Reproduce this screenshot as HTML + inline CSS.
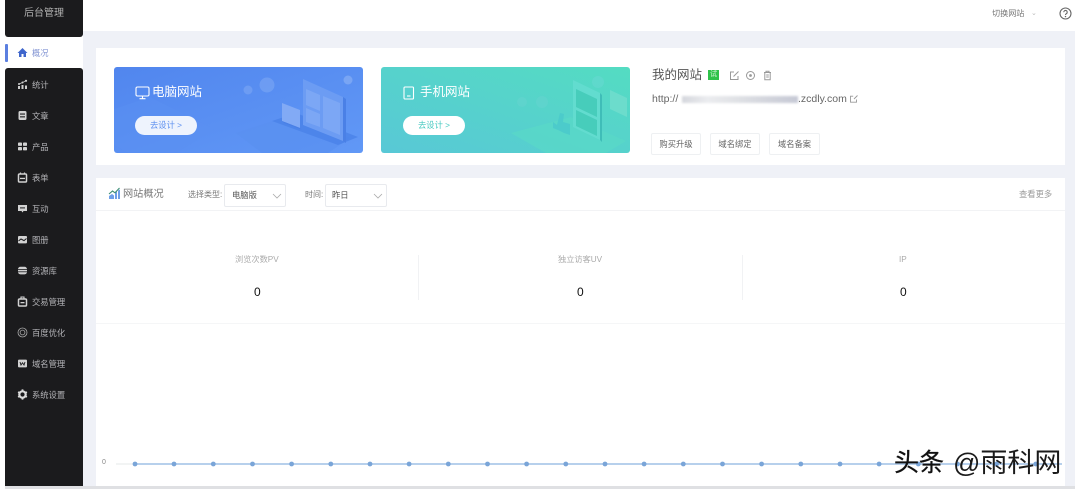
<!DOCTYPE html>
<html lang="zh">
<head>
<meta charset="utf-8">
<style>
html,body{margin:0;padding:0;width:1080px;height:494px;overflow:hidden;background:#fff;font-family:"Liberation Sans","Noto Sans CJK SC",sans-serif}
.a{position:absolute}
#wrap{position:relative;width:1080px;height:494px;overflow:hidden;background:#fff;filter:blur(.35px)}
.t{position:absolute;white-space:nowrap;line-height:1}
.m{position:absolute;left:32px;font-size:8.3px;color:#b4b4b8;white-space:nowrap;line-height:10px}
.ic{position:absolute;left:17px;width:11px;height:11px}
.btn{position:absolute;top:133px;height:20px;border:1px solid #eef0f2;border-radius:2px;font-size:8.3px;color:#666;text-align:center;line-height:20px;box-sizing:content-box}
.sel{position:absolute;top:184px;height:21px;border:1px solid #e8eaee;border-radius:2px;background:#fff;font-size:8.3px;color:#555;line-height:21px;box-sizing:content-box}
</style>
</head>
<body>
<div id="wrap">
<!-- page background -->
<div class="a" style="left:83px;top:31px;width:992px;height:455px;background:#eff1f7"></div>
<div class="a" style="left:5px;top:486px;width:1070px;height:3px;background:#dfe0e3"></div>

<!-- header -->
<div class="a" style="left:83px;top:0;width:992px;height:31px;background:#fff"></div>
<div class="t" style="left:992px;top:10px;font-size:8.1px;color:#777">切换网站</div>
<div class="t" style="left:1031px;top:10px;font-size:7px;color:#bbb">⌄</div>
<svg class="a" style="left:1059px;top:7px" width="13" height="13" viewBox="0 0 13 13"><circle cx="6.500" cy="6.500" r="5.500" fill="none" stroke="#666" stroke-width="1.100"/><path d="M4.800 5.200a1.700 1.700 0 1 1 2.600 1.400c-.6.400-.9.700-.9 1.400" fill="none" stroke="#666" stroke-width="1.100"/><circle cx="6.500" cy="9.600" r=".7" fill="#666"/></svg>

<!-- sidebar -->
<div class="a" style="left:5px;top:0;width:78px;height:486px;background:#fff"></div>
<div class="a" style="left:5px;top:0;width:78px;height:37px;background:#1b1b1d;border-radius:0 0 3px 3px"></div>
<div class="a" style="left:5px;top:68px;width:78px;height:418px;background:#1b1b1d;border-radius:3px 3px 0 0"></div>
<div class="a" style="left:5px;top:44px;width:3px;height:18px;background:#5b7fe0;border-radius:1px"></div>
<div class="t" style="left:24px;top:9px;font-size:10px;color:#b0b0b0">后台管理</div>

<svg class="ic" style="top:47px" viewBox="0 0 11 11"><path d="M5.500 1L10.500 6H9v4H6.500V7h-2v3H2V6H.5z" fill="#3f66cc"/></svg>
<div class="m" style="top:48px;color:#8496d4">概况</div>

<svg class="ic" style="top:79px" viewBox="0 0 11 11"><g fill="#cfcfcf"><rect x="1" y="7" width="2" height="3"/><rect x="4.500" y="6" width="2" height="4"/><rect x="8" y="6.500" width="2" height="3.500"/><circle cx="2" cy="5" r="1"/><circle cx="5.500" cy="3.500" r="1"/><circle cx="9" cy="1.800" r="1.100"/></g><path d="M2 5l3.500-1.500L9 1.800" fill="none" stroke="#cfcfcf" stroke-width=".7"/></svg>
<div class="m" style="top:80px">统计</div>

<svg class="ic" style="top:110px" viewBox="0 0 11 11"><rect x="1.500" y="1" width="8" height="9" rx="1.500" fill="#d2d2d2"/><rect x="3" y="3.500" width="5" height="1.100" fill="#1b1b1d"/><rect x="3" y="6.300" width="5" height="1.100" fill="#1b1b1d"/></svg>
<div class="m" style="top:111px">文章</div>

<svg class="ic" style="top:141px" viewBox="0 0 11 11"><g fill="#d2d2d2"><rect x="1" y="1.500" width="4" height="3.400" rx=".8"/><rect x="6" y="1.500" width="4" height="3.400" rx=".8"/><rect x="1" y="6" width="4" height="3.400" rx=".8"/><rect x="6" y="6" width="4" height="3.400" rx=".8"/></g></svg>
<div class="m" style="top:142px">产品</div>

<svg class="ic" style="top:172px" viewBox="0 0 11 11"><path d="M3.500 .5V2.500M7.500 .5V2.500" stroke="#d2d2d2" stroke-width="1.200"/><rect x="1.500" y="2" width="8" height="8" rx="1" fill="none" stroke="#d2d2d2" stroke-width="1.500"/><rect x="3" y="5.800" width="5" height="1.300" fill="#d2d2d2"/></svg>
<div class="m" style="top:173px">表单</div>

<svg class="ic" style="top:203px" viewBox="0 0 11 11"><path d="M1 2h9v6H6.500L5.500 9.500 4.500 8H1z" fill="#d2d2d2"/><rect x="3" y="4.400" width="5" height="1" fill="#1b1b1d"/></svg>
<div class="m" style="top:204px">互动</div>

<svg class="ic" style="top:234px" viewBox="0 0 11 11"><rect x="1" y="2" width="9" height="7.400" rx="1" fill="#d2d2d2"/><path d="M1.500 7l2.500-2 3 1.600L9.500 4.500" fill="none" stroke="#1b1b1d" stroke-width="1"/></svg>
<div class="m" style="top:235px">图册</div>

<svg class="ic" style="top:265px" viewBox="0 0 11 11"><rect x="1" y="1.800" width="9" height="7.600" rx="2.500" fill="#cfcfcf"/><rect x="1" y="4" width="9" height=".8" fill="#1b1b1d"/><rect x="1" y="6.400" width="9" height=".8" fill="#1b1b1d"/></svg>
<div class="m" style="top:266px">资源库</div>

<svg class="ic" style="top:296px" viewBox="0 0 11 11"><path d="M4 1h3v2H4z" fill="none" stroke="#d2d2d2" stroke-width="1.100"/><rect x="1.500" y="3" width="8" height="7" rx="1" fill="none" stroke="#d2d2d2" stroke-width="1.500"/><rect x="3.500" y="6" width="4" height="1.300" fill="#d2d2d2"/></svg>
<div class="m" style="top:297px">交易管理</div>

<svg class="ic" style="top:327px" viewBox="0 0 11 11"><circle cx="5.500" cy="5.500" r="4.500" fill="none" stroke="#aaa" stroke-width=".8"/><circle cx="5.500" cy="5.500" r="2.400" fill="none" stroke="#aaa" stroke-width=".8"/></svg>
<div class="m" style="top:328px">百度优化</div>

<svg class="ic" style="top:358px" viewBox="0 0 11 11"><rect x="1" y="1.600" width="9" height="7.800" rx="1" fill="#d2d2d2"/><path d="M3 4l1 3 1.500-2.200L7 7l1-3" fill="none" stroke="#1b1b1d" stroke-width=".9"/></svg>
<div class="m" style="top:359px">域名管理</div>

<svg class="ic" style="top:389px" viewBox="0 0 11 11"><circle cx="5.500" cy="5.500" r="3.200" fill="none" stroke="#dcdcdc" stroke-width="2.200"/><path d="M5.500 .4v1.800M5.500 8.800v1.800M1.100 3l1.500.8M8.400 7.200l1.500.8M1.100 8l1.500-.8M8.400 3.800L9.900 3" stroke="#dcdcdc" stroke-width="1.800"/></svg>
<div class="m" style="top:390px">系统设置</div>

<!-- top panel -->
<div class="a" style="left:96px;top:48px;width:969px;height:117px;background:#fff"></div>

<!-- blue card -->
<svg class="a" style="left:114px;top:67px" width="249" height="86" viewBox="0 0 249 86">
<defs>
<linearGradient id="b1" x1="0" y1="0" x2="1" y2="1"><stop offset="0" stop-color="#5186ee"/><stop offset="1" stop-color="#6198f6"/></linearGradient>
<linearGradient id="g1" x1="0" y1="1" x2="1" y2="0"><stop offset="0" stop-color="#58c8d6"/><stop offset="1" stop-color="#54dcc2"/></linearGradient>
</defs>
<rect width="249" height="86" rx="3" fill="url(#b1)"/>
<path d="M0 42L36 30 100 62 62 86H14L0 78z" fill="#5b91f1" opacity=".45"/>
<circle cx="134" cy="23" r="4.500" fill="#74a1f3" opacity=".75"/>
<circle cx="153" cy="18" r="7.500" fill="#74a1f3" opacity=".75"/>
<circle cx="234" cy="13" r="4.500" fill="#7fa9f5" opacity=".85"/>
<path d="M122 66l52-17 62 22-22 15h-66z" fill="#5a90f0" opacity=".75"/>
<path d="M158 54l24-8 62 24-20 8z" fill="#4a82e8" opacity=".8"/>
<path d="M189 12l40 18v44l-40-16z" fill="#6c9cf3"/>
<path d="M192 22l14 6v16l-14-6zM209 29l17 7v32l-17-7zM192 41l14 6v13l-14-5z" fill="#7fa9f5" opacity=".85"/>
<path d="M229 30l3 2v44l-3-2z" fill="#4a80e6"/>
<path d="M168 36l18 7v18l-18-7z" fill="#82aaf5"/>
<path d="M168 54l18 7 2 2-18-7z" fill="#4a80e6"/>
</svg>
<svg class="a" style="left:135px;top:86px" width="15" height="14" viewBox="0 0 15 14"><rect x="1" y="1" width="13" height="9" rx="1.500" fill="none" stroke="#fff" stroke-width="1.100"/><path d="M4.500 12.700h6M7.500 10v2.700" stroke="#fff" stroke-width="1.100"/></svg>
<div class="t" style="left:152px;top:86px;font-size:12.500px;color:#fff">电脑网站</div>
<div class="a" style="left:135px;top:116px;width:62px;height:19px;background:#eef3fd;border-radius:10px;text-align:center;font-size:8.300px;line-height:19px;color:#5c8ff0">去设计 &gt;</div>

<!-- green card -->
<svg class="a" style="left:381px;top:67px" width="249" height="86" viewBox="0 0 249 86">
<rect width="249" height="86" rx="3" fill="url(#g1)"/>
<circle cx="141" cy="35" r="5" fill="#64d4cf" opacity=".6"/>
<circle cx="161" cy="35" r="6" fill="#64d4cf" opacity=".6"/>
<circle cx="217" cy="15" r="6" fill="#66d8d0" opacity=".6"/>
<path d="M130 66l60-16 55 24-20 12h-60z" fill="#5adbc7" opacity=".6"/>
<path d="M192 13l27 13v47l-27-13z" fill="#62dccf"/>
<path d="M195 22l21 10v18l-21-10zM195 43l21 10v16l-21-10z" fill="#47cdbb"/>
<path d="M219 26l2 2v47l-2-2z" fill="#3fbdb8"/>
<path d="M229 23l17 8v19l-17-8z" fill="#6cdccc"/>
<path d="M176 58l3-12 4 1-1 8 7 2v11l-6-2-6-3-5-2v-6z" fill="#4ccbcb"/>
</svg>
<svg class="a" style="left:403px;top:86px" width="12" height="14" viewBox="0 0 12 14"><rect x="1" y="1" width="9.500" height="12" rx="1" fill="none" stroke="#fff" stroke-width="1.100"/><path d="M4 10h3.500" stroke="#fff" stroke-width="1.100"/></svg>
<div class="t" style="left:420px;top:86px;font-size:12.500px;color:#fff">手机网站</div>
<div class="a" style="left:403px;top:116px;width:62px;height:19px;background:#fff;border-radius:10px;text-align:center;font-size:8.300px;line-height:19px;color:#45c9c0">去设计 &gt;</div>

<!-- site info -->
<div class="t" style="left:652px;top:69px;font-size:12.500px;color:#555">我的网站</div>
<div class="a" style="left:708px;top:70px;width:11px;height:10px;background:#2fc24a;color:#d8f5dc;font-size:7px;line-height:10px;text-align:center">试</div>
<svg class="a" style="left:729px;top:70px" width="11" height="11" viewBox="0 0 11 11"><path d="M9 6v3.500H1.500V2H5" fill="none" stroke="#999" stroke-width="1"/><path d="M4.500 6.500L9.500 1.500" stroke="#999" stroke-width="1"/></svg>
<svg class="a" style="left:745px;top:70px" width="11" height="11" viewBox="0 0 11 11"><circle cx="5.500" cy="5.500" r="4" fill="none" stroke="#999" stroke-width="1"/><circle cx="5.500" cy="5.500" r="1.400" fill="#999"/></svg>
<svg class="a" style="left:762px;top:70px" width="11" height="11" viewBox="0 0 11 11"><path d="M2 2.500h7M4 2.500V1.200h3v1.300M2.800 2.500v7.300h5.400V2.500M4.200 5h2.600M4.200 7h2.600" fill="none" stroke="#999" stroke-width="1"/></svg>
<div class="t" style="left:652px;top:94px;font-size:10.500px;color:#666">http://</div>
<div class="a" style="left:682px;top:96px;width:116px;height:7px;background:linear-gradient(90deg,#d5d7dd,#ebecef 22%,#dfe1e5 48%,#d2d4dc 75%,#c6c9d5);filter:blur(1px)"></div>
<div class="t" style="left:798px;top:94px;font-size:10.500px;color:#666">.zcdly.com</div>
<svg class="a" style="left:849px;top:94px" width="10" height="10" viewBox="0 0 10 10"><path d="M7.500 5.500v2.700h-6v-6h2.700M5 5L8.500 1.500" fill="none" stroke="#999" stroke-width=".9"/></svg>
<div class="btn" style="left:651px;width:48px">购买升级</div>
<div class="btn" style="left:710px;width:48px">域名绑定</div>
<div class="btn" style="left:769px;width:49px">域名备案</div>

<!-- overview panel -->
<div class="a" style="left:96px;top:178px;width:969px;height:308px;background:#fff"></div>
<div class="a" style="left:96px;top:210px;width:969px;height:1px;background:#f2f3f5"></div>
<svg class="a" style="left:108px;top:187px" width="13" height="13" viewBox="0 0 13 13"><path d="M1 12V9l3-2 2 1.500V12zM7 12V6l2-1.500V12zM10 12V3.500l2-1V12z" fill="#6f9fe8"/><path d="M1 7l3.500-3 2.500 1.800L11.500 1" fill="none" stroke="#3d8f74" stroke-width="1.100"/></svg>
<div class="t" style="left:123px;top:190px;font-size:10.200px;color:#777">网站概况</div>
<div class="t" style="left:188px;top:191px;font-size:8px;color:#777">选择类型:</div>
<div class="sel" style="left:224px;width:60px"><span style="position:absolute;left:7px">电脑版</span><svg class="a" style="left:47px;top:8px" width="10" height="6" viewBox="0 0 10 6"><path d="M1 1l4 4 4-4" fill="none" stroke="#aaa" stroke-width=".8"/></svg></div>
<div class="t" style="left:305px;top:191px;font-size:8px;color:#777">时间:</div>
<div class="sel" style="left:325px;width:60px"><span style="position:absolute;left:6px">昨日</span><svg class="a" style="left:47px;top:8px" width="10" height="6" viewBox="0 0 10 6"><path d="M1 1l4 4 4-4" fill="none" stroke="#aaa" stroke-width=".8"/></svg></div>
<div class="t" style="left:1019px;top:190px;font-size:8.300px;color:#999">查看更多</div>

<!-- stats -->
<div class="t" style="left:235px;top:256px;font-size:8.200px;color:#aaa">浏览次数PV</div>
<div class="t" style="left:558px;top:256px;font-size:8.200px;color:#aaa">独立访客UV</div>
<div class="t" style="left:899px;top:256px;font-size:8.200px;color:#aaa">IP</div>
<div class="t" style="left:254px;top:286px;font-size:12px;color:#111">0</div>
<div class="t" style="left:577px;top:286px;font-size:12px;color:#111">0</div>
<div class="t" style="left:900px;top:286px;font-size:12px;color:#111">0</div>
<div class="a" style="left:418px;top:255px;width:1px;height:45px;background:#f1f2f4"></div>
<div class="a" style="left:742px;top:255px;width:1px;height:45px;background:#f1f2f4"></div>
<div class="a" style="left:96px;top:323px;width:969px;height:1px;background:#f5f6f7"></div>

<!-- chart -->
<div class="t" style="left:102px;top:459px;font-size:7px;color:#888">0</div>
<svg class="a" style="left:96px;top:455px" width="969" height="18" viewBox="0 0 969 18">
<path d="M20 9H39" stroke="#e6e8ea" stroke-width="1"/>
<path d="M39 9H966" stroke="#9fc0e6" stroke-width="1.600"/>
<g fill="#7aa5d8">
<circle cx="39" cy="9" r="2.400"/><circle cx="78" cy="9" r="2.400"/><circle cx="117.300" cy="9" r="2.400"/><circle cx="156.500" cy="9" r="2.400"/><circle cx="195.600" cy="9" r="2.400"/><circle cx="234.800" cy="9" r="2.400"/><circle cx="274" cy="9" r="2.400"/><circle cx="313.100" cy="9" r="2.400"/><circle cx="352.300" cy="9" r="2.400"/><circle cx="391.500" cy="9" r="2.400"/><circle cx="430.600" cy="9" r="2.400"/><circle cx="469.800" cy="9" r="2.400"/><circle cx="509" cy="9" r="2.400"/><circle cx="548.100" cy="9" r="2.400"/><circle cx="587.300" cy="9" r="2.400"/><circle cx="626.500" cy="9" r="2.400"/><circle cx="665.600" cy="9" r="2.400"/><circle cx="704.800" cy="9" r="2.400"/><circle cx="744" cy="9" r="2.400"/><circle cx="783.100" cy="9" r="2.400"/><circle cx="822.300" cy="9" r="2.400"/><circle cx="861.500" cy="9" r="2.400"/><circle cx="900.600" cy="9" r="2.400"/><circle cx="939.800" cy="9" r="2.400"/>
</g>
</svg>

<!-- watermark -->
<div class="t" style="left:894px;top:451px;font-size:25px;color:#111;-webkit-text-stroke:.3px #111">头条</div>
<div class="t" style="left:953px;top:450px;font-size:27px;color:#1a1a1a">@雨科网</div>
</div>
</body>
</html>
